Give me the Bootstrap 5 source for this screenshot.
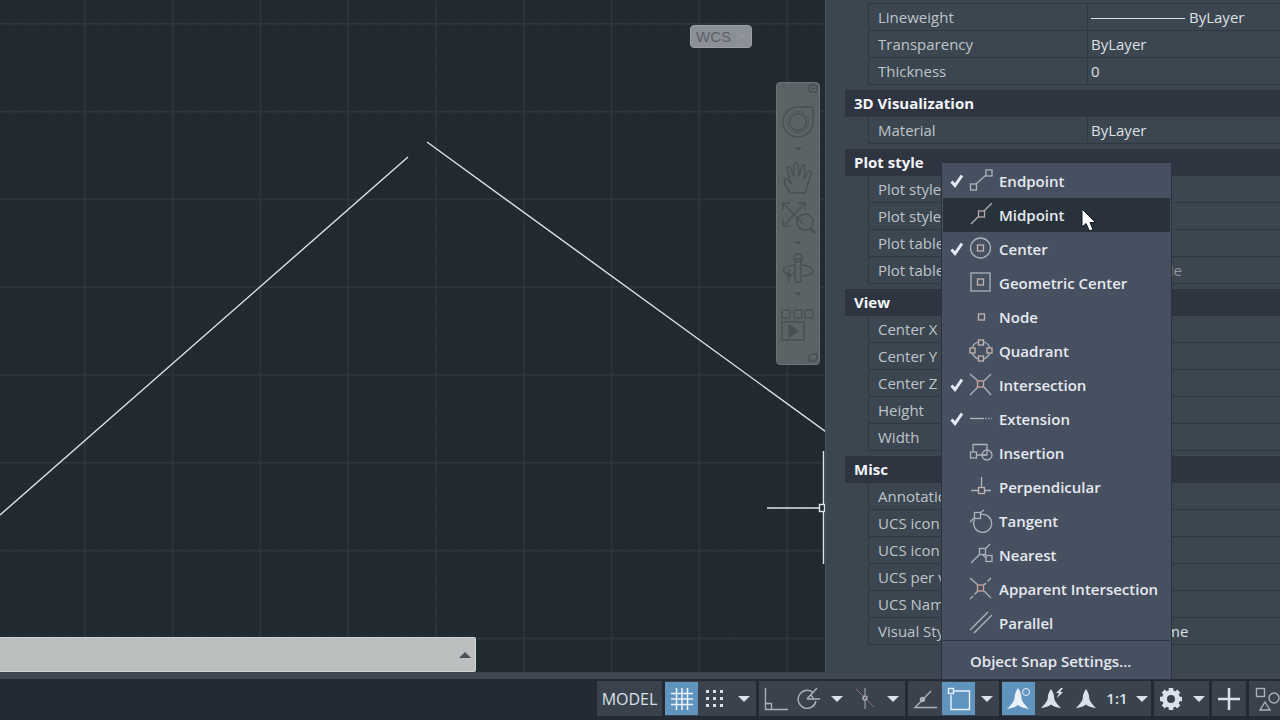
<!DOCTYPE html>
<html lang="en">
<head>
<meta charset="utf-8">
<meta name="viewport" content="width=device-width, initial-scale=1">
<title>Drawing - Object Snap</title>
<link href="https://cdn.jsdelivr.net/npm/bootstrap@5.3.0/dist/css/bootstrap.min.css" rel="stylesheet">
<style>
  body { font-family: "Open Sans", "Noto Sans", sans-serif; font-size: 15px; background: #222a31; color: #d5d9df; }
  svg { display: block; flex: none; }
  .ln { fill: none; stroke: currentColor; }

  /* drawing area */
  .drawing { background: #222a31; min-width: 0; }
  .wcs { top: 25px; right: 73px; width: 62px; height: 23px; padding: 0 5px; border: 1px solid #9ba0a5; border-radius: 4px; background: #8b9096; color: #596066; font: 15px/18px "Liberation Sans", sans-serif; }
  .navtools { top: 82px; right: 5px; width: 44px; height: 283px; background: #5b6366; border: 1px solid #6d7477; border-radius: 4px; color: #485054; }
  .cmdline { left: 0; bottom: 0; width: 58%; max-width: 476px; height: 35px; background: #bbbfc0; border: 1px solid #d0d4d5; border-left: 0; border-radius: 0 2px 2px 0; }
  .cmdline input { background: transparent; border: 0; min-width: 0; outline: 0; }

  /* properties palette */
  .palette { width: 455px; background: #3c4650; border-left: 1px solid #48525c; padding-left: 19px; padding-top: 3px; }
  .palette section { margin-bottom: 5px; }
  .palette h2 { background: #2e3440; color: #f3f5f8; font-size: 15px; font-weight: 700; line-height: 27px; padding-left: 9px; margin: 0; }
  .props { width: calc(100% - 23px); margin-left: 23px; table-layout: fixed; border-collapse: separate; border-spacing: 0; border-left: 1px solid #303842; }
  .props th, .props td { height: 27px; line-height: 26px; padding: 0; font-weight: 400; white-space: nowrap; overflow: hidden; border-bottom: 1px solid #303842; }
  .props th { width: 218px; padding-left: 9px; color: #bfc4ca; }
  .props td { padding-left: 3px; border-left: 1px solid #303842; color: #dde0e5; }
  .props .off { color: #8f969f; }
  .first-props { border-top: 1px solid #303842; }
  .weight { display: inline-block; width: 94px; border-top: 1px solid #dde0e5; margin-right: 4px; vertical-align: middle; }

  /* status bar */
  .status { gap: 3px; background: #232a33; border-top: 7px solid #3e4651; padding: 2px 0 4px; }
  .tools { background: #39424d; height: 35px; }
  .status button { width: 34px; height: 33px; padding: 0; border: 0; border-radius: 0; background: transparent; color: #dbe0e9; font-size: 15px; }
  .status .w-model { width: 65px; font-size: 16px; }
  .status .w-drop { width: 24px; }
  .status .w-gear { width: 21px; }
  .status .w-tight { width: 32px; }
  .status .w-last { width: 31px; }
  .status .w-scale { width: 48px; font-weight: 600; }
  .status .lit { width: 33px; background: #6193bf; color: #e9f1fa; }
  .status .soft { color: #a9b1bc; }

  /* object snap menu */
  .snapmenu { left: -1px; bottom: 100%; width: 231px; margin-bottom: 2px; padding: 1px 1px 0; background: #475060; border: 1px solid #2b323d; z-index: 10; }
  .status .snapmenu button { width: 100%; height: 34px; padding-left: 7px; color: #e6e9ef; font-weight: 600; text-align: left; }
  .status .snapmenu .hot { background: #29323b; }
  .snapmenu .tick { width: 14px; margin-right: 5px; color: #e6e9f4; }
  .snapmenu .glyph { width: 24px; margin-right: 6px; color: #adb3bd; }
  .status .snapmenu .settings { height: 39px; padding-left: 27px; padding-top: 3px; border-top: 1px solid #2d3541; }
  .pointer { left: 138px; top: 10px; }
</style>
</head>
<body class="vh-100 d-flex flex-column overflow-hidden">

<svg width="0" height="0" class="position-absolute" aria-hidden="true">
  <symbol id="caret" viewBox="0 0 12 6"><path d="M0 0H12L6 6Z" fill="currentColor"/></symbol>
  <symbol id="check" viewBox="0 0 14 14"><path d="M1.5 7.5L5 11.5L12 1.5" fill="none" stroke="currentColor" stroke-width="3"/></symbol>
  <symbol id="anno" viewBox="0 0 24 24"><path d="M12 1C14 4 15.500 7 15.500 11C15.500 13 17 16 23 22C18 21 14 20 12 18C10 20 6 21 1 22C7 16 8.500 13 8.500 11C8.500 7 10 4 12 1Z" fill="currentColor"/></symbol>
</svg>

<div class="d-flex flex-grow-1 overflow-hidden">
  <main class="drawing position-relative flex-grow-1 overflow-hidden">
    <svg width="100%" height="100%" role="img" aria-label="Drawing with two lines">
      <defs>
        <pattern id="minor" x="84" y="23" width="17.56" height="17.56" patternUnits="userSpaceOnUse"><path d="M.5 0V18M0 .5H18" stroke="#252d34" fill="none"/></pattern>
        <pattern id="major" x="84" y="23" width="87.8" height="87.8" patternUnits="userSpaceOnUse"><path d="M.7 0V88M0 .7H88" stroke="#2e373e" stroke-width="1.4" fill="none"/></pattern>
      </defs>
      <rect width="100%" height="100%" fill="url(#minor)"/>
      <rect width="100%" height="100%" fill="url(#major)"/>
      <g stroke="#dfe3e7" stroke-width="1.4" fill="none">
        <path d="M408 157L0 515M427 142L827 432.500"/>
        <path d="M767 508H819M823.500 451V504M823.500 512V564"/>
        <rect x="819.500" y="504.500" width="5" height="7"/>
      </g>
    </svg>

    <button class="wcs position-absolute d-flex align-items-center justify-content-between" type="button">WCS
      <svg width="10" height="6" viewBox="0 0 10 6" class="ln"><path d="M1 4L5 1L9 4" stroke="#a3a7ab"/></svg>
    </button>

    <div class="navtools position-absolute" role="toolbar" aria-label="Navigation">
      <svg width="42" height="281" viewBox="0 0 42 281" class="ln" stroke-width="1.4">
        <rect x="32" y="2" width="8" height="7" rx="2"/><path d="M34 5.500H38"/>
        <path d="M21 24H36V39A15 15 0 1 1 21 24Z"/><circle cx="21" cy="39" r="8.500"/><circle cx="21" cy="39" r="11" stroke-width=".7"/>
        <path d="M19 65H23L21 67Z" fill="currentColor"/>
        <path d="M13 110C10 104 5 99 8 96C10 95 12 98 14 100L10 86C10 83 13 83 14 86L17 94L17 82C17 79 20 79 21 82L22 93L25 83C26 81 29 82 28 85L27 96L31 89C33 87 35 88 34 91L30 104L28 110Z"/>
        <path d="M7 121L27 142M7 142L27 121M6 127V120H13M21 120H28V127M6 136V143H13"/><circle cx="28" cy="139" r="8"/><path d="M33 145L38 150" stroke-width="3"/>
        <path d="M19 159H23L21 161Z" fill="currentColor"/>
        <rect x="18" y="176" width="6" height="23" rx="2"/><circle cx="21" cy="175" r="4"/><path d="M17 182C3 184 3 190 15 192M25 182C39 184 40 191 26 193M12 186V199M8 189L12 194L17 190"/>
        <path d="M19 210H23L21 212Z" fill="currentColor"/>
        <rect x="5" y="227" width="8" height="8" rx="1"/><rect x="17" y="227" width="8" height="8" rx="1"/><rect x="28" y="227" width="8" height="8" rx="1"/>
        <rect x="5" y="239" width="22" height="18"/><path d="M12 242L21 248L12 254Z" fill="currentColor"/>
        <path d="M32 278V273L35 271H40V276L37 278Z"/>
      </svg>
    </div>

    <form class="cmdline position-absolute d-flex align-items-center">
      <input class="flex-grow-1 h-100" type="text" aria-label="Command line">
      <button class="btn p-0 me-1 border-0" type="button" aria-label="Command history"><svg width="12" height="6" viewBox="0 0 12 6"><path d="M0 6L6 0L12 6Z" fill="#4c5153"/></svg></button>
    </form>
  </main>

  <aside class="palette flex-shrink-0" aria-label="Properties">
    <section>
      <table class="props first-props">
        <tr><th scope="row">Lineweight</th><td><span class="weight"></span>ByLayer</td></tr>
        <tr><th scope="row">Transparency</th><td>ByLayer</td></tr>
        <tr><th scope="row">Thickness</th><td>0</td></tr>
      </table>
    </section>
    <section>
      <h2>3D Visualization</h2>
      <table class="props">
        <tr><th scope="row">Material</th><td>ByLayer</td></tr>
      </table>
    </section>
    <section>
      <h2>Plot style</h2>
      <table class="props">
        <tr><th scope="row">Plot style</th><td></td></tr>
        <tr><th scope="row">Plot style table</th><td></td></tr>
        <tr><th scope="row">Plot table attached to</th><td></td></tr>
        <tr><th scope="row">Plot table type</th><td class="off">Not available</td></tr>
      </table>
    </section>
    <section>
      <h2>View</h2>
      <table class="props">
        <tr><th scope="row">Center X</th><td class="off">1452.06383</td></tr>
        <tr><th scope="row">Center Y</th><td></td></tr>
        <tr><th scope="row">Center Z</th><td></td></tr>
        <tr><th scope="row">Height</th><td></td></tr>
        <tr><th scope="row">Width</th><td></td></tr>
      </table>
    </section>
    <section>
      <h2>Misc</h2>
      <table class="props">
        <tr><th scope="row">Annotation scale</th><td></td></tr>
        <tr><th scope="row">UCS icon On</th><td></td></tr>
        <tr><th scope="row">UCS icon at origin</th><td></td></tr>
        <tr><th scope="row">UCS per viewport</th><td></td></tr>
        <tr><th scope="row">UCS Name</th><td></td></tr>
        <tr><th scope="row">Visual Style</th><td>2D Wireframe</td></tr>
      </table>
    </section>
  </aside>
</div>

<footer class="status d-flex justify-content-end flex-shrink-0">
  <div class="tools d-flex align-items-center"><button class="w-model" type="button">MODEL</button></div>
  <div class="tools d-flex align-items-center">
    <button class="lit d-flex align-items-center justify-content-center" type="button" aria-label="Grid"><svg width="24" height="24" class="ln" stroke-width="1.500"><path d="M6.500 1V23M12 1V23M17.500 1V23M1 6.500H23M1 12H23M1 17.500H23"/></svg></button>
    <button class="d-flex align-items-center justify-content-center" type="button" aria-label="Snap mode"><svg width="18" height="18" fill="currentColor"><path d="M0 0h3v3h-3zM7 0h3v3h-3zM14 0h3v3h-3zM0 7h3v3h-3zM7 7h3v3h-3zM14 7h3v3h-3zM0 14h3v3h-3zM7 14h3v3h-3zM14 14h3v3h-3z"/></svg></button>
    <button class="w-drop d-flex align-items-center justify-content-center" type="button" aria-label="Snap options"><svg width="12" height="6"><use href="#caret"/></svg></button>
  </div>
  <div class="tools d-flex align-items-center">
    <button class="soft d-flex align-items-center justify-content-center" type="button" aria-label="Ortho mode"><svg width="24" height="24" class="ln" stroke-width="1.400"><path d="M1.500 1V22.500H24M1.500 16.500H7.500V22.500"/></svg></button>
    <button class="soft w-tight d-flex align-items-center justify-content-center" type="button" aria-label="Polar tracking"><svg width="24" height="24" class="ln" stroke-width="1.400"><path d="M16 5.500A9 9 0 1 0 19 14M10 12H23M10 12L20 1M14 8Q16 10 16 12"/></svg></button>
    <button class="w-drop d-flex align-items-center justify-content-center" type="button" aria-label="Polar options"><svg width="12" height="6"><use href="#caret"/></svg></button>
    <button class="soft w-tight d-flex align-items-center justify-content-center" type="button" aria-label="Isometric drafting"><svg width="20" height="24" class="ln"><path d="M1 2L19 20" stroke="#956b76"/><path d="M10 1V8M10 13V22"/><circle cx="10" cy="11" r="2" stroke-width="1.400"/></svg></button>
    <button class="w-drop d-flex align-items-center justify-content-center" type="button" aria-label="Isometric options"><svg width="12" height="6"><use href="#caret"/></svg></button>
  </div>
  <div class="tools d-flex align-items-center">
    <button class="d-flex align-items-center justify-content-center" type="button" aria-label="Object snap tracking"><svg width="24" height="22" class="ln soft" stroke-width="1.400"><path d="M18 3L2 19.500H24"/><circle cx="9.500" cy="11.500" r="2" fill="currentColor"/></svg></button>
    <div class="dropup position-relative">
      <button class="lit d-flex align-items-center justify-content-center" type="button" aria-label="Object snap" aria-expanded="true"><svg width="24" height="24" class="ln" stroke-width="1.400"><path d="M7 4H22.500V22.500H4V8"/><rect x="1.500" y="1.500" width="5" height="5"/></svg></button>
      <div class="snapmenu position-absolute" role="menu" aria-label="Object snap modes">
        <button class="d-flex align-items-center" type="button" role="menuitemcheckbox" aria-checked="true"><svg class="tick" height="14"><use href="#check"/></svg><svg class="glyph ln" height="24" stroke-width="1.300"><rect x="1.500" y="15" width="6" height="6"/><rect x="17" y="1" width="6" height="6"/><path d="M7 15L17 6"/></svg>Endpoint</button>
        <button class="hot d-flex align-items-center position-relative" type="button" role="menuitemcheckbox" aria-checked="false"><svg class="tick" height="14"></svg><svg class="glyph ln" height="24" stroke-width="1.300"><path d="M2 21L10 13M15 8L23 0"/><rect x="9.500" y="8" width="6" height="6" stroke="#bcaaa6"/></svg>Midpoint
          <svg class="pointer position-absolute" width="18" height="24" viewBox="0 0 18 24"><path d="M1 1V19L5 15.500L8.500 23L12 21.500L9 14.500H14.500Z" fill="#fff" stroke="#111820"/></svg></button>
        <button class="d-flex align-items-center" type="button" role="menuitemcheckbox" aria-checked="true"><svg class="tick" height="14"><use href="#check"/></svg><svg class="glyph ln" height="24" stroke-width="1.300"><circle cx="11.500" cy="11" r="10"/><rect x="8.500" y="8" width="6" height="6" stroke="#c2b3ae"/></svg>Center</button>
        <button class="d-flex align-items-center" type="button" role="menuitemcheckbox" aria-checked="false"><svg class="tick" height="14"></svg><svg class="glyph ln" height="24" stroke-width="1.300"><rect x="2" y="2" width="19" height="18"/><rect x="8.500" y="8" width="6" height="6" stroke="#c2b3ae"/></svg>Geometric Center</button>
        <button class="d-flex align-items-center" type="button" role="menuitemcheckbox" aria-checked="false"><svg class="tick" height="14"></svg><svg class="glyph ln" height="24" stroke-width="1.300"><rect x="9.500" y="9" width="6" height="6" stroke="#c2b3ae"/></svg>Node</button>
        <button class="d-flex align-items-center" type="button" role="menuitemcheckbox" aria-checked="false"><svg class="tick" height="14"></svg><svg class="glyph ln" height="24" stroke-width="1.300"><path d="M9 3Q4 5 3.500 8.500M15 3Q20 5 20.500 8.500M3.500 14.500Q4 17 9 20M20.500 14.500Q20 17 15 20"/><g stroke="#c7b5ad"><rect x="9.500" y="1" width="5" height="5"/><rect x="1" y="9" width="5" height="5"/><rect x="18" y="9" width="5" height="5"/><rect x="9.500" y="17" width="5" height="5"/></g></svg>Quadrant</button>
        <button class="d-flex align-items-center" type="button" role="menuitemcheckbox" aria-checked="true"><svg class="tick" height="14"><use href="#check"/></svg><svg class="glyph ln" height="24" stroke-width="1.300"><path d="M1 1L9 8M22 1L15 8M1 22L9 14M22 22L15 14"/><rect x="8.500" y="8" width="6" height="6" stroke="#c6aaa0"/></svg>Intersection</button>
        <button class="d-flex align-items-center" type="button" role="menuitemcheckbox" aria-checked="true"><svg class="tick" height="14"><use href="#check"/></svg><svg class="glyph ln" height="24" stroke-width="1.300"><path d="M1 11.500H15"/><path d="M16 11.500H23" stroke-dasharray="2 1" opacity=".7"/></svg>Extension</button>
        <button class="d-flex align-items-center" type="button" role="menuitemcheckbox" aria-checked="false"><svg class="tick" height="14"></svg><svg class="glyph ln" height="24" stroke-width="1.300"><path d="M4 10V3.500H18V9M8 14H16"/><rect x="1.500" y="11" width="6" height="6"/><circle cx="18" cy="14" r="5"/><path d="M18 9V14H13"/></svg>Insertion</button>
        <button class="d-flex align-items-center" type="button" role="menuitemcheckbox" aria-checked="false"><svg class="tick" height="14"></svg><svg class="glyph ln" height="24" stroke-width="1.300"><path d="M12.500 2V12M2 15.500H9.500M15.500 15.500H22"/><rect x="9.500" y="12.500" width="6" height="6" stroke="#c2b3ae"/></svg>Perpendicular</button>
        <button class="d-flex align-items-center" type="button" role="menuitemcheckbox" aria-checked="false"><svg class="tick" height="14"></svg><svg class="glyph ln" height="24" stroke-width="1.300"><path d="M1 13L5 9M11 4L15 1M12 5.500A9 9 0 1 1 5.500 10.500"/><rect x="5.500" y="3.500" width="6" height="6"/></svg>Tangent</button>
        <button class="d-flex align-items-center" type="button" role="menuitemcheckbox" aria-checked="false"><svg class="tick" height="14"></svg><svg class="glyph ln" height="24" stroke-width="1.300"><path d="M2 20L11 11M16 6L21 1M14 12L17 15"/><rect x="10.500" y="5.500" width="6" height="6"/><rect x="17" y="12.500" width="6" height="6"/></svg>Nearest</button>
        <button class="d-flex align-items-center" type="button" role="menuitemcheckbox" aria-checked="false"><svg class="tick" height="14"></svg><svg class="glyph ln" height="24" stroke-width="1.300"><path d="M1 1L9 8M15 14L22 21"/><path d="M22 1L15 8M9 14L1 22" stroke-dasharray="5 2"/><rect x="8.500" y="8" width="6" height="6" stroke="#c6a39a"/></svg>Apparent Intersection</button>
        <button class="d-flex align-items-center" type="button" role="menuitemcheckbox" aria-checked="false"><svg class="tick" height="14"></svg><svg class="glyph ln" height="24" stroke-width="1.300"><path d="M1 19L19 1M5 22L23 4"/></svg>Parallel</button>
        <button class="settings" type="button" role="menuitem">Object Snap Settings...</button>
      </div>
    </div>
    <button class="w-drop d-flex align-items-center justify-content-center" type="button" aria-label="Object snap options"><svg width="12" height="6"><use href="#caret"/></svg></button>
  </div>
  <div class="tools d-flex align-items-center">
    <button class="lit d-flex align-items-center justify-content-center" type="button" aria-label="Annotation visibility"><svg width="24" height="24"><use href="#anno" x="-1" y="0" width="24" height="24"/><circle cx="19" cy="5" r="3.500" class="ln"/></svg></button>
    <button class="d-flex align-items-center justify-content-center" type="button" aria-label="Automatic annotation scale"><svg width="24" height="24"><use href="#anno" x="0" y="1" width="22" height="22"/><path d="M21 1L16 6H19L17 11L23 5H20L23 1Z" fill="currentColor"/></svg></button>
    <button class="d-flex align-items-center justify-content-center" type="button" aria-label="Annotation objects"><svg width="22" height="22"><use href="#anno"/></svg></button>
    <button class="w-scale d-flex align-items-center justify-content-center gap-2" type="button">1:1<svg width="12" height="6"><use href="#caret"/></svg></button>
  </div>
  <div class="tools d-flex align-items-center">
    <button class="d-flex align-items-center justify-content-center" type="button" aria-label="Workspace switching"><svg width="24" height="24" class="ln"><circle cx="12" cy="12" r="6.500" stroke-width="5"/><path d="M12 1V4M12 20V23M1 12H4M20 12H23M4.200 4.200L6.500 6.500M17.500 17.500L19.800 19.800M4.200 19.800L6.500 17.500M17.500 6.500L19.800 4.200" stroke-width="4.500"/></svg></button>
    <button class="w-gear d-flex align-items-center justify-content-center" type="button" aria-label="Workspace options"><svg width="12" height="6"><use href="#caret"/></svg></button>
  </div>
  <div class="tools d-flex align-items-center">
    <button class="d-flex align-items-center justify-content-center" type="button" aria-label="Annotation monitor"><svg width="22" height="22" class="ln" stroke-width="2.500"><path d="M11 0V22M0 11H22"/></svg></button>
  </div>
  <div class="tools d-flex align-items-center">
    <button class="soft w-last d-flex align-items-center justify-content-end overflow-hidden" type="button" aria-label="Isolate objects"><svg width="25" height="24" class="ln" stroke-width="1.400"><rect x="1.500" y="1.500" width="8" height="8"/><circle cx="19" cy="11" r="5"/><path d="M10 15L15 23H5Z"/></svg></button>
  </div>
</footer>

<script src="https://cdn.jsdelivr.net/npm/bootstrap@5.3.0/dist/js/bootstrap.bundle.min.js"></script>
</body>
</html>
